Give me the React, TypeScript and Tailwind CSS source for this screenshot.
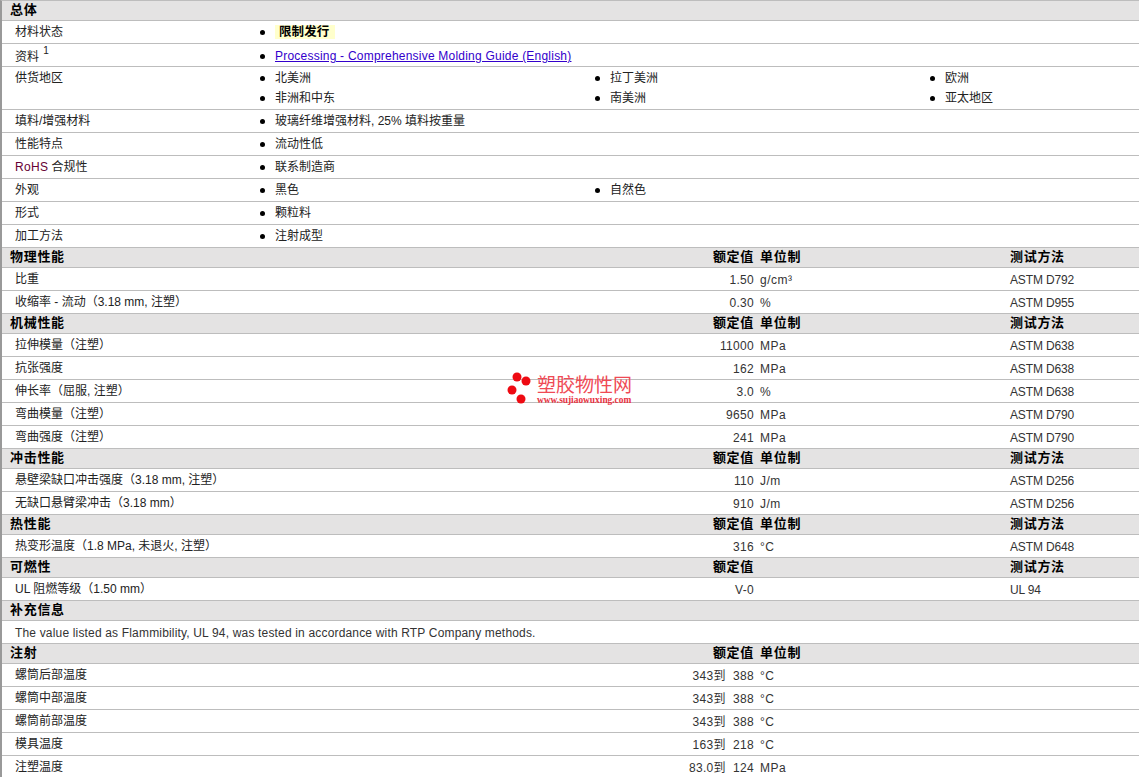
const font = '[font-family:"Liberation_Sans","Noto_Sans_CJK_SC",sans-serif]'

function Header({ title, rated, unit, test }: { title: string; rated?: boolean; unit?: boolean; test?: boolean }) {
  return (
    <div className="flex h-5 items-center pb-[1px] bg-[#e4e3e3] border-b border-[#bdbdbd] text-[13px] font-bold text-black">
      <div className="w-[752px] flex justify-between pl-[8px]">
        <span className="tracking-[0.7px]">{title}</span>
        {rated && <span className="tracking-[0.7px]">额定值</span>}
      </div>
      <div className="w-[250px] pl-[6px] tracking-[0.7px]">{unit ? '单位制' : ''}</div>
      <div className="pl-[6px] tracking-[0.7px]">{test ? '测试方法' : ''}</div>
    </div>
  )
}

function DataRow({ label, value, unit, test }: { label: string; value: string; unit?: string; test?: string }) {
  return (
    <div className="flex h-[23px] border-b border-[#bdbdbd] text-[12px] text-[#222]">
      <div className="w-[752px] flex justify-between pl-[13px]">
        <span className="pt-[2px]">{label}</span>
        <span className="pt-[3px] tracking-[0.3px] whitespace-pre text-[#333]">{value}</span>
      </div>
      <div className="w-[250px] pl-[6px] pt-[3px] tracking-[0.5px] text-[#333]">{unit}</div>
      <div className="pl-[6px] pt-[3px] tracking-[-0.15px] text-[#333]">{test}</div>
    </div>
  )
}

function Bullet({ children }: { children: React.ReactNode }) {
  return (
    <div className="flex items-center h-5">
      <span className="ml-[3px] mr-[10px] h-[5px] w-[5px] rounded-full bg-black" />
      {children}
    </div>
  )
}

function InfoRow({ label, items, h = 'h-[23px]', pad = 'pt-[1px]', labelPad = 'pt-[2px]' }: {
  label: React.ReactNode
  items: React.ReactNode[]
  h?: string
  pad?: string
  labelPad?: string
}) {
  return (
    <div className={`flex ${h} border-b border-[#bdbdbd] text-[12px] text-[#222]`}>
      <div className={`w-[255px] pl-[13px] ${labelPad}`}>{label}</div>
      <div className={`flex-1 grid grid-cols-[335px_335px_1fr] auto-rows-[20px] ${pad}`}>
        {items.map((item, i) => (
          <Bullet key={i}>{item}</Bullet>
        ))}
      </div>
    </div>
  )
}

export default function App() {
  return (
    <div className={`relative h-[777px] overflow-hidden bg-white border-l-2 border-l-[#999] border-t border-t-[#bdbdbd] ${font}`}>
      <Header title="总体" />
      <InfoRow
        label="材料状态"
        items={[<span className="bg-[#ffffcc] font-bold text-black pl-[4px] pr-[6px] text-[12.5px] leading-[14px] tracking-[0.1px]">限制发行</span>]}
      />
      <InfoRow
        label={<span>资料 <sup className="text-[10px] align-top relative top-[3px] ml-[1px]">1</sup></span>}
        labelPad="pt-[4px]"
        pad="pt-[2px]"
        items={[<a href="#" className="text-[#3300cc] underline tracking-[0.22px]">Processing - Comprehensive Molding Guide (English)</a>]}
      />
      <InfoRow label="供货地区" h="h-[43px]" items={['北美洲', '拉丁美洲', '欧洲', '非洲和中东', '南美洲', '亚太地区']} />
      <InfoRow label="填料/增强材料" items={['玻璃纤维增强材料, 25% 填料按重量']} />
      <InfoRow label="性能特点" items={['流动性低']} />
      <InfoRow label={<span><span className="text-[#660033] tracking-[0.3px]">RoHS</span> 合规性</span>} items={['联系制造商']} />
      <InfoRow label="外观" items={['黑色', '自然色']} />
      <InfoRow label="形式" items={['颗粒料']} />
      <InfoRow label="加工方法" items={['注射成型']} />

      <Header title="物理性能" rated unit test />
      <DataRow label="比重" value="1.50" unit="g/cm³" test="ASTM D792" />
      <DataRow label="收缩率 - 流动（3.18 mm, 注塑）" value="0.30" unit="%" test="ASTM D955" />

      <Header title="机械性能" rated unit test />
      <DataRow label="拉伸模量（注塑）" value="11000" unit="MPa" test="ASTM D638" />
      <DataRow label="抗张强度" value="162" unit="MPa" test="ASTM D638" />
      <DataRow label="伸长率（屈服, 注塑）" value="3.0" unit="%" test="ASTM D638" />
      <DataRow label="弯曲模量（注塑）" value="9650" unit="MPa" test="ASTM D790" />
      <DataRow label="弯曲强度（注塑）" value="241" unit="MPa" test="ASTM D790" />

      <Header title="冲击性能" rated unit test />
      <DataRow label="悬壁梁缺口冲击强度（3.18 mm, 注塑）" value="110" unit="J/m" test="ASTM D256" />
      <DataRow label="无缺口悬臂梁冲击（3.18 mm）" value="910" unit="J/m" test="ASTM D256" />

      <Header title="热性能" rated unit test />
      <DataRow label="热变形温度（1.8 MPa, 未退火, 注塑）" value="316" unit="°C" test="ASTM D648" />

      <Header title="可燃性" rated test />
      <DataRow label="UL 阻燃等级（1.50 mm）" value="V-0" test="UL 94" />

      <Header title="补充信息" />
      <div className="h-[23px] border-b border-[#bdbdbd] pl-[13px] pt-[3px] text-[12px] text-[#333] tracking-[0.17px]">
        The value listed as Flammibility, UL 94, was tested in accordance with RTP Company methods.
      </div>

      <Header title="注射" rated unit />
      <DataRow label="螺筒后部温度" value="343到  388" unit="°C" />
      <DataRow label="螺筒中部温度" value="343到  388" unit="°C" />
      <DataRow label="螺筒前部温度" value="343到  388" unit="°C" />
      <DataRow label="模具温度" value="163到  218" unit="°C" />
      <DataRow label="注塑温度" value="83.0到  124" unit="MPa" />

      {/* watermark */}
      <div className="absolute left-[504px] top-[370px] flex items-start">
        <svg width="28" height="34" viewBox="0 0 28 34">
          <circle cx="11" cy="6" r="4.5" fill="#ee0a12" />
          <circle cx="20" cy="10" r="4.5" fill="#ee0a12" />
          <circle cx="6" cy="19" r="4.5" fill="#ee0a12" />
          <circle cx="15" cy="28" r="4.5" fill="#ee0a12" />
        </svg>
        <div className="mt-[5px] ml-[3px]">
          <div className="text-[19px] leading-[20px] text-[#ef4a55]">塑胶物性网</div>
          <div className='text-[9.4px] leading-[9px] font-bold text-[#e8323f] [font-family:"Liberation_Serif",serif]'>www.sujiaowuxing.com</div>
        </div>
      </div>
    </div>
  )
}
